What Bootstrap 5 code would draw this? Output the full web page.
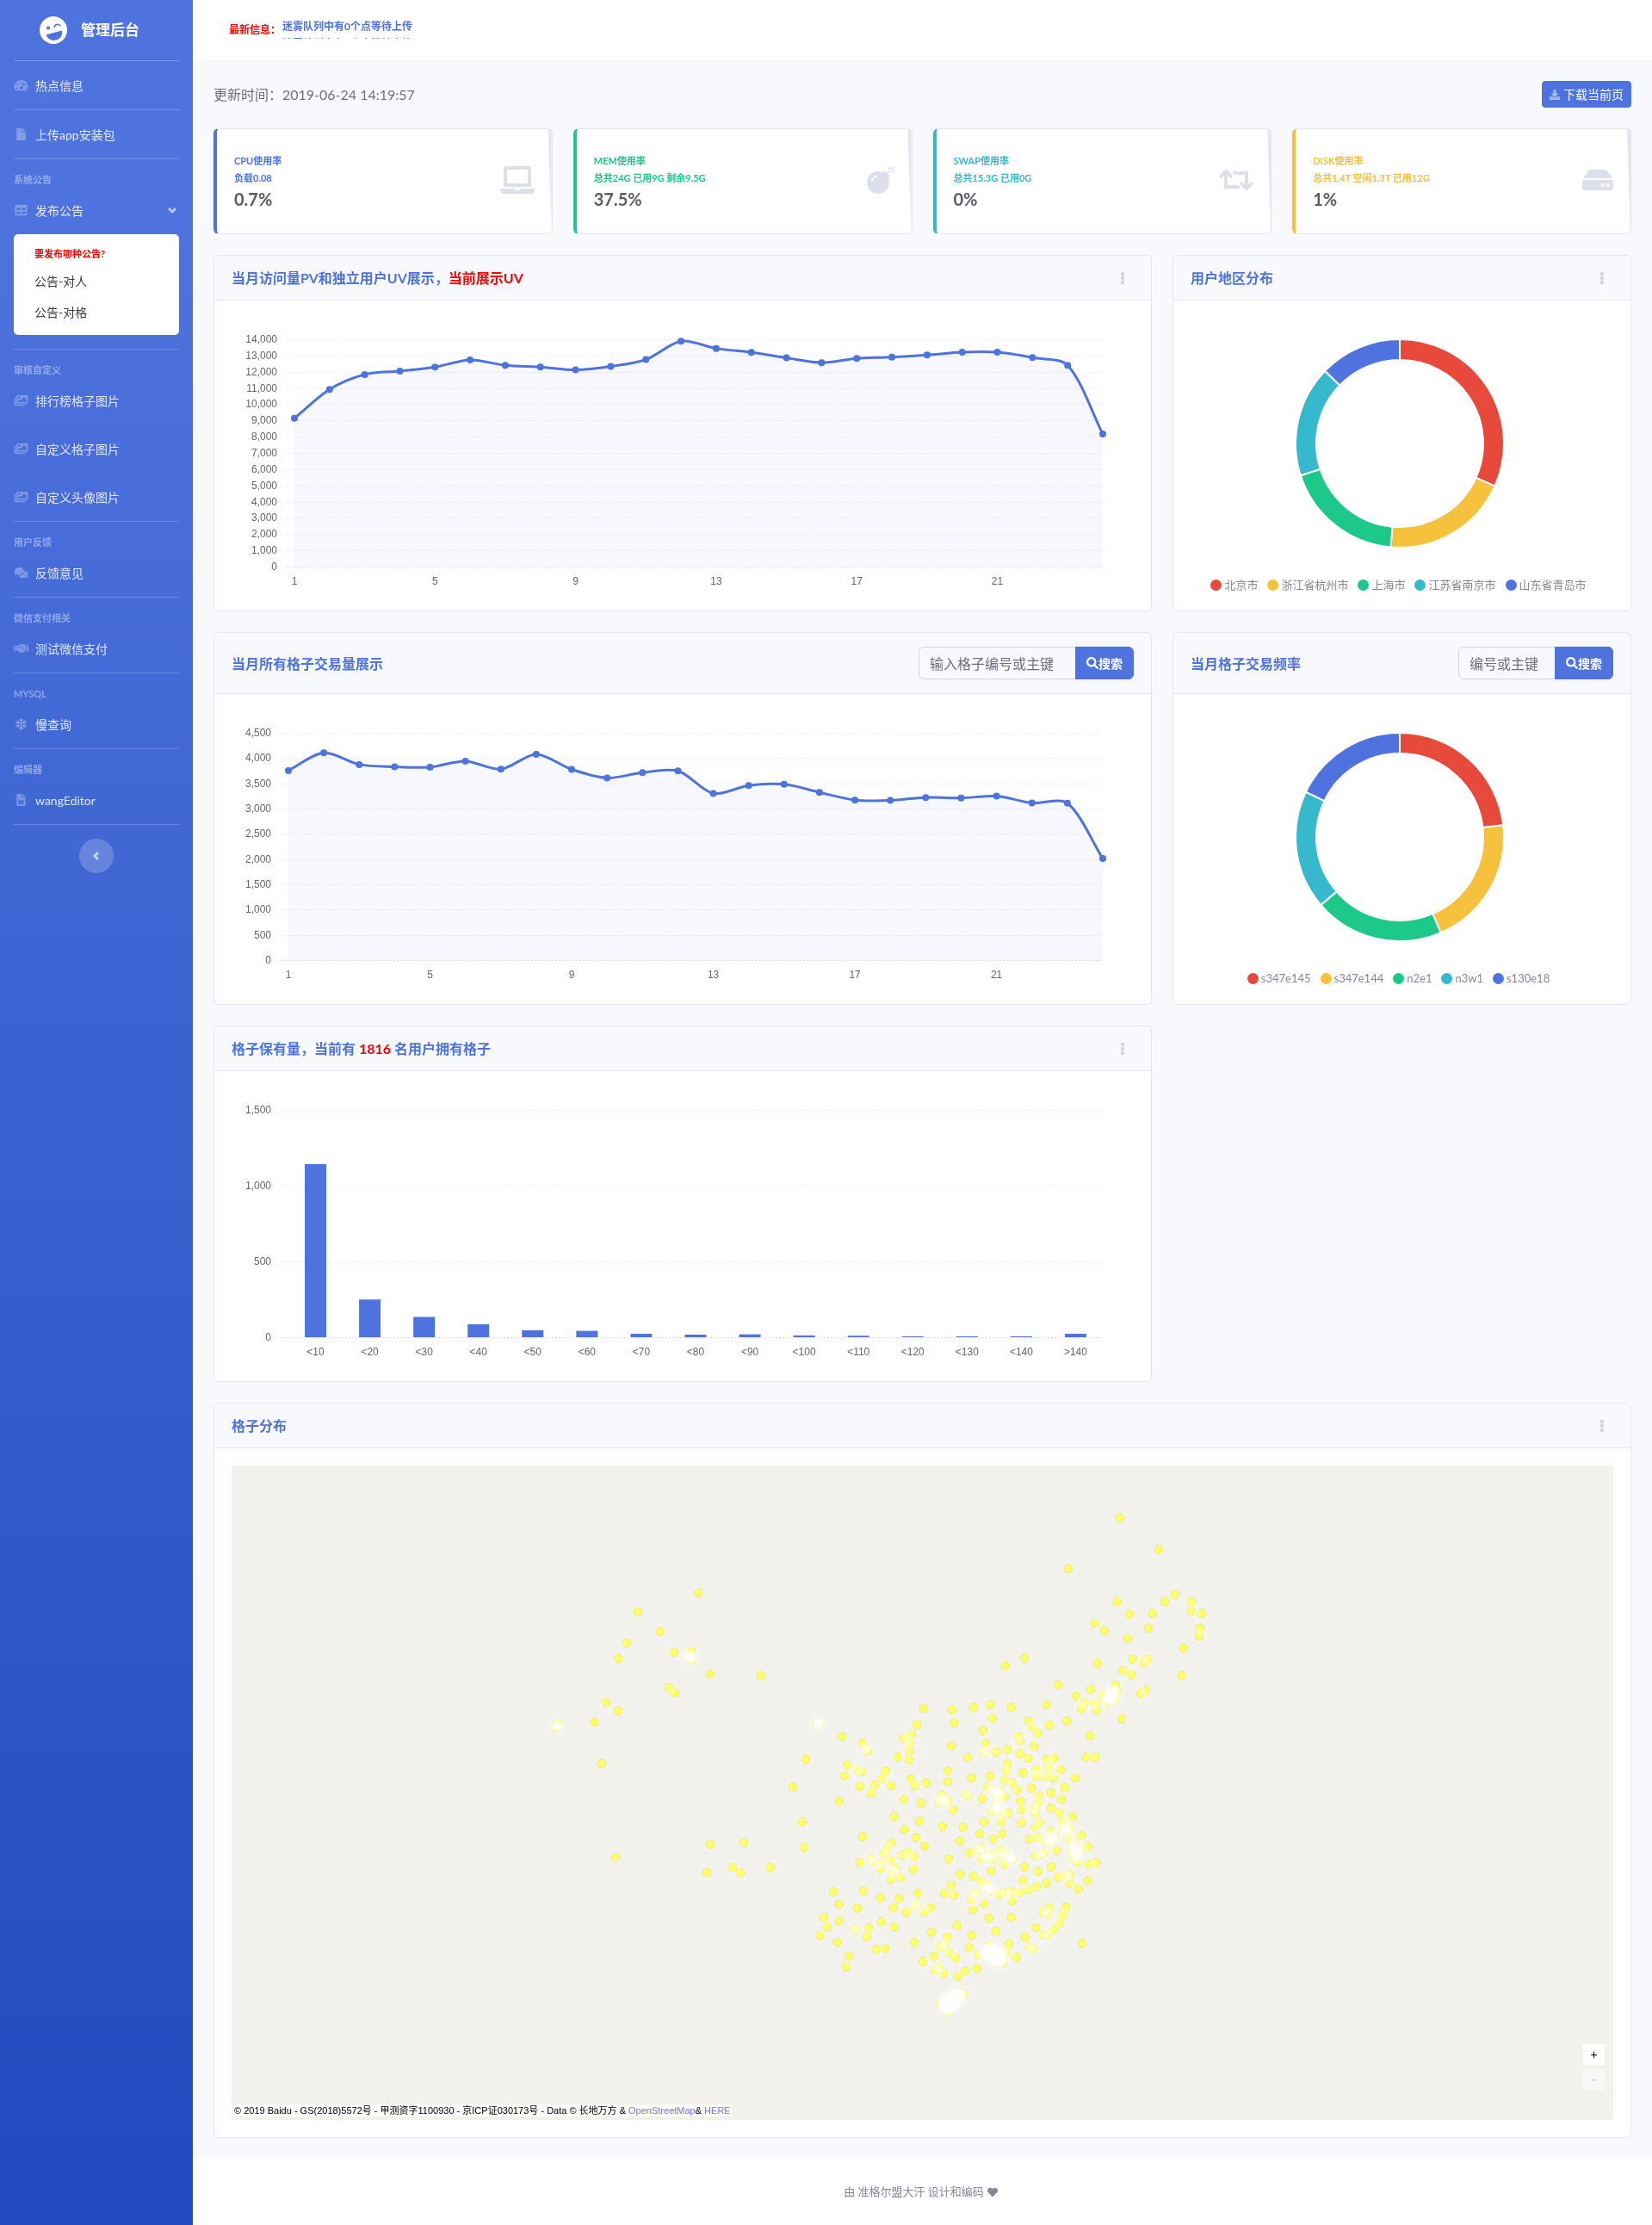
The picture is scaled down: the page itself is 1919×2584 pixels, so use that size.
<!DOCTYPE html>
<html lang="zh-CN">
<head>
<meta charset="utf-8">
<meta name="viewport" content="width=device-width, initial-scale=1">
<title>管理后台</title>
<link href="https://cdn.jsdelivr.net/npm/bootstrap@5.3.0/dist/css/bootstrap.min.css" rel="stylesheet">
<style>
:root{--brand:#4e73df;--line:#e3e6f0;--pale:#f8f9fc;--muted:#858796;--faint:#dddfeb}
body{font-family:Lato,"Noto Sans CJK SC",sans-serif;font-size:16px;color:var(--muted);background:var(--pale)}
a{text-decoration:none}
.ico{fill:currentColor;flex:none}
.side{width:224px;flex:none;background:linear-gradient(180deg,#4e73df 10%,#224abe 100%)}
.side-brand{height:70px;color:#fff;font-size:17px;font-weight:700}
.side hr{margin:0 16px;border-top:1px solid rgba(255,255,255,.2);opacity:1}
.side hr.spaced{margin-bottom:16px}
.side-title{padding:0 16px;font-size:11px;line-height:15px;font-weight:700;color:rgba(255,255,255,.4)}
.side .nav-link{display:flex;align-items:center;gap:8px;height:56px;padding:0 16px;font-size:14px;color:rgba(255,255,255,.85)}
.side .nav-link .ico{width:17px;height:14px;color:rgba(255,255,255,.3)}
.side .nav-link .caret{width:16px;height:12px;margin-left:auto;color:rgba(255,255,255,.6)}
.sub{margin:0 16px 16px;padding:9px 0 8px;background:#fff;border-radius:5px}
.sub-title{padding:0 24px;font-size:11px;line-height:28px;font-weight:700;color:red}
.sub a{display:block;padding:0 24px;font-size:14px;line-height:36px;color:#3a3b45}
.fold{width:40px;height:40px;margin:16px auto 0;border:0;border-radius:50%;background:rgba(255,255,255,.2);color:rgba(255,255,255,.6)}
.topbar{height:70px;background:#fff;padding:0 42px;font-size:12px;font-weight:700;gap:2px}
.news{height:24px;line-height:20px;overflow:hidden;color:var(--brand)}
.page{padding:24px 24px 0}
.stamp{color:#6e707e}
.btn-brand{--bs-btn-color:#fff;--bs-btn-bg:var(--brand);--bs-btn-border-color:var(--brand);--bs-btn-hover-color:#fff;--bs-btn-hover-bg:#2e59d9;font-size:14px}
.panel{border:1px solid var(--line);border-radius:6px;background:#fff;margin-bottom:24px}
.panel-head{display:flex;align-items:center;justify-content:space-between;padding:16px 20px;background:var(--pale);border-bottom:1px solid var(--line);border-radius:6px 6px 0 0}
.panel-head h2{font-size:16px;line-height:19px;font-weight:700;color:var(--brand);margin:0}
.panel-body{padding:20px}
.dots{border:0;background:none;padding:0;width:26px;height:19px;line-height:0;color:#d1d3e2}
.red{color:red}
.panel-head .form-control{font-size:16px;height:38px;background:var(--pale);border-color:#d1d3e2;color:#6e707e}
.panel-head .form-control::placeholder{color:#6e707e}
.w-long{width:183px!important;flex:none!important}
.w-short{width:113px!important;flex:none!important}
.find{width:68px;height:38px;padding:0;font-weight:700}
.stat{position:relative;height:123px;padding:0 20px;border-left:4px solid var(--tone)}
.stat::after{content:"";position:absolute;top:0;right:0;bottom:0;width:4px;background:var(--line);clip-path:polygon(0 0,100% 0,100% 100%)}
.stat-label{font-size:11px;line-height:20px;font-weight:700;color:var(--tone)}
.stat-value{font-size:20px;line-height:28px;font-weight:700;color:#5a5c69}
.stat .ico{color:var(--faint);height:32px;margin-bottom:4px}
.plot{height:320px}
.plot svg,.ring svg,.geo svg{display:block;overflow:visible}
.plot text{font:12px "Liberation Sans",sans-serif;fill:#666}
.ring{height:277px;padding:24px 0 8px}
.key{display:flex;justify-content:center;gap:11px;margin-top:24px;font-size:13px;line-height:19px;white-space:nowrap}
.key span{display:flex;align-items:center;gap:3px;padding:0}
.key i{width:13px;height:13px;border-radius:50%;background:var(--c)}
.geo{position:relative;height:760px;background:#f2f1ec;overflow:hidden}
.geo g{isolation:isolate}
.geo circle{mix-blend-mode:plus-lighter}
.geo-zoom{position:absolute;right:10px;bottom:35px;display:flex;flex-direction:column;gap:5px}
.geo-zoom button{width:25px;height:24px;padding:0;border:0;background:#fff;color:#000;font:14px "Liberation Sans",sans-serif}
.geo-zoom button:disabled{background:#f7f7f7;color:#bbb}
.geo-copy{position:absolute;left:2px;bottom:4px;padding:0 1px;background:rgba(255,255,255,.7);color:#000;font:11px/14px "Liberation Sans","Noto Sans CJK SC",sans-serif}
.geo-copy a{color:#7979dc}
.foot{background:#fff;height:77px;font-size:13px}
</style>
<script src="https://cdn.jsdelivr.net/npm/bootstrap@5.3.0/dist/js/bootstrap.bundle.min.js"></script>
</head>
<body>
<svg class="d-none" aria-hidden="true">
<symbol id="i-gauge" viewBox="0 0 576 512"><path fill-rule="evenodd" d="M288 32C129 32 0 161 0 320c0 53 14 102 39 145 6 9 16 15 27 15h444c11 0 21-6 27-15 25-43 39-92 39-145C576 161 447 32 288 32zm0 64a32 32 0 1 1 0 64 32 32 0 0 1 0-64zM96 352a32 32 0 1 1 0 64 32 32 0 0 1 0-64zm48-160a32 32 0 1 1 0 64 32 32 0 0 1 0-64zm336 160a32 32 0 1 1 0 64 32 32 0 0 1 0-64zm-48-160a32 32 0 1 1 0 64 32 32 0 0 1 0-64zm-37-49c13 4 20 18 15 30l-61 184a62 62 0 0 1 3 59H224a64 64 0 0 1 80-90l61-168c4-12 18-19 30-15z"/></symbol>
<symbol id="i-file" viewBox="0 0 384 512"><path d="M224 136V0H24C10.700 0 0 10.700 0 24v464c0 13.300 10.700 24 24 24h336c13.300 0 24-10.700 24-24V160H248c-13.200 0-24-10.800-24-24zm160-14.100v6.100H256V0h6.100c6.400 0 12.500 2.500 17 7l97.900 98c4.500 4.500 7 10.600 7 16.900z"/></symbol>
<symbol id="i-table" viewBox="0 0 512 512"><path d="M464 32H48C21.490 32 0 53.490 0 80v352c0 26.510 21.490 48 48 48h416c26.510 0 48-21.490 48-48V80c0-26.510-21.490-48-48-48zM224 416H64v-96h160v96zm0-160H64v-96h160v96zm224 160H288v-96h160v96zm0-160H288v-96h160v96z"/></symbol>
<symbol id="i-images" viewBox="0 0 576 512"><path d="M480 416v16c0 26.510-21.490 48-48 48H48c-26.510 0-48-21.490-48-48V176c0-26.510 21.490-48 48-48h16v208c0 44.112 35.888 80 80 80h336zm96-80V80c0-26.510-21.490-48-48-48H144c-26.510 0-48 21.490-48 48v256c0 26.510 21.490 48 48 48h384c26.510 0 48-21.490 48-48zM256 128c0 26.510-21.490 48-48 48s-48-21.490-48-48 21.490-48 48-48 48 21.490 48 48zm-96 144l55.515-55.515c4.686-4.686 12.284-4.686 16.971 0L272 256l135.515-135.515c4.686-4.686 12.284-4.686 16.971 0L512 208v112H160v-48z"/></symbol>
<symbol id="i-comments" viewBox="0 0 576 512"><path d="M416 192c0-88.400-93.100-160-208-160S0 103.600 0 192c0 34.300 14.100 65.900 38 92-13.400 30.200-35.500 54.200-35.800 54.500-2.200 2.300-2.800 5.700-1.500 8.700S4.800 352 8 352c36.600 0 66.900-12.300 88.700-25 32.200 15.700 70.300 25 111.300 25 114.900 0 208-71.600 208-160zm122 220c23.900-26 38-57.700 38-92 0-66.900-53.500-124.200-129.300-148.100.9 6.600 1.300 13.300 1.300 20.100 0 105.900-107.700 192-240 192-10.800 0-21.300-.8-31.700-1.900C207.800 439.600 281.800 480 368 480c41 0 79.100-9.200 111.300-25 21.800 12.700 52.100 25 88.700 25 3.200 0 6.100-1.900 7.300-4.800 1.300-2.900.7-6.300-1.500-8.700-.3-.3-22.400-24.200-35.800-54.500z"/></symbol>
<symbol id="i-shake" viewBox="0 0 640 512"><path d="M0 128h72v256H0zM568 128h72v256h-72zM104 128h90l54-44c20-14 40-20 64-20h104c22 0 42 9 57 24l40 40h23v220h-22c0 20-16 36-36 40-10 26-34 40-60 36-14 22-44 30-68 16-24 14-56 10-74-12L150 352h-46z"/><path d="M330 118l-92 84c-14 14 8 52 50 34l52-42 150 122" fill="none" stroke="#456bd8" stroke-width="24"/></symbol>
<symbol id="i-snow" viewBox="0 0 448 512"><g fill="none" stroke="currentColor" stroke-width="56" stroke-linecap="round"><path d="M224 28v456M28 142l392 228M28 370l392-228"/><path d="M160 66l64 62 64-62M160 446l64-62 64 62M30 224l86-24-20-88M418 288l-86 24 20 88M96 400l20-88-86-24M352 112l-20 88 86 24" stroke-width="48"/></g></symbol>
<symbol id="i-word" viewBox="0 0 384 512"><path d="M224 136V0H24C10.700 0 0 10.700 0 24v464c0 13.300 10.700 24 24 24h336c13.300 0 24-10.700 24-24V160H248c-13.200 0-24-10.800-24-24zm57.100 120H305c7.700 0 13.400 7.100 11.700 14.700l-38 168c-1.200 5.500-6.100 9.300-11.700 9.300h-38c-5.500 0-10.300-3.800-11.600-9.100-25.800-103.500-20.800-81.200-25.600-110.500h-.5c-1.100 14.300-2.400 17.400-25.600 110.500-1.300 5.300-6.100 9.100-11.600 9.100H117c-5.600 0-10.500-3.900-11.700-9.400l-37.800-168C65.800 263.100 71.500 256 79.200 256h24.500c5.700 0 10.600 4 11.700 9.600 15.600 78 20.100 109.500 21 122.200 1.600-10.200 7.300-32.700 29.400-122.700 1.300-5.400 6.100-9.100 11.700-9.100h29.100c5.600 0 10.400 3.800 11.700 9.200 24 100.400 28.800 124 29.600 129.400-.2-11.200-2.600-17.800 21.600-129.200 1.200-5.500 6.100-9.400 11.600-9.400zM384 121.900v6.100H256V0h6.100c6.400 0 12.500 2.500 17 7l97.900 98c4.500 4.500 7 10.600 7 16.900z"/></symbol>
<symbol id="i-down" viewBox="0 0 12 12"><path d="M2 4l4 4 4-4" fill="none" stroke="currentColor" stroke-width="3"/></symbol>
<symbol id="i-left" viewBox="0 0 12 12"><path d="M8 2L4 6l4 4" fill="none" stroke="currentColor" stroke-width="3"/></symbol>
<symbol id="i-more" viewBox="0 0 6 16"><circle cx="3" cy="3" r="2.200"/><circle cx="3" cy="8" r="2.200"/><circle cx="3" cy="13" r="2.200"/></symbol>
<symbol id="i-get" viewBox="0 0 512 512"><path d="M216 0h80c13.300 0 24 10.700 24 24v168h87.700c17.800 0 26.700 21.500 14.100 34.100L269.700 378.300c-7.500 7.500-19.800 7.500-27.300 0L90.100 226.100c-12.600-12.600-3.700-34.100 14.100-34.100H192V24c0-13.300 10.700-24 24-24zm296 376v112c0 13.300-10.700 24-24 24H24c-13.300 0-24-10.700-24-24V376c0-13.300 10.700-24 24-24h146.700l49 49c20.100 20.100 52.500 20.100 72.600 0l49-49H488c13.300 0 24 10.700 24 24zm-124 88c0-11-9-20-20-20s-20 9-20 20 9 20 20 20 20-9 20-20zm64 0c0-11-9-20-20-20s-20 9-20 20 9 20 20 20 20-9 20-20z"/></symbol>
<symbol id="i-search" viewBox="0 0 512 512"><path d="M505 442.700L405.300 343c-4.500-4.500-10.600-7-17-7H372c27.600-35.300 44-79.700 44-128C416 93.100 322.900 0 208 0S0 93.100 0 208s93.100 208 208 208c48.300 0 92.700-16.400 128-44v16.300c0 6.400 2.500 12.500 7 17l99.700 99.700c9.400 9.400 24.600 9.400 33.900 0l28.300-28.300c9.400-9.400 9.400-24.600.1-34zM208 336c-70.700 0-128-57.200-128-128 0-70.700 57.200-128 128-128 70.700 0 128 57.200 128 128 0 70.700-57.200 128-128 128z"/></symbol>
<symbol id="i-heart" viewBox="0 0 512 512"><path d="M462.300 62.600C407.500 15.900 326 24.300 275.700 76.200L256 96.500l-19.700-20.300C186.100 24.300 104.500 15.900 49.700 62.600c-62.800 53.600-66.100 149.800-9.900 207.900l193.500 199.800c12.500 12.900 32.800 12.900 45.300 0l193.500-199.800c56.300-58.100 53-154.300-9.800-207.900z"/></symbol>
</svg>
<div class="d-flex min-vh-100">
<nav class="side d-flex flex-column" aria-label="主菜单">
  <a class="side-brand d-flex align-items-center justify-content-center gap-3 pe-3" href="#">
    <svg width="32" height="32" viewBox="0 0 32 32"><circle cx="16" cy="16" r="16" fill="#fff"/><g transform="rotate(-15 16 16)"><circle cx="11" cy="12" r="2" fill="#4e73df"/><path d="M18 13c1-3 6-3 7 0" fill="none" stroke="#4e73df" stroke-width="1.500" stroke-linecap="round"/><path d="M6.500 19h19c0 5-4 9-9.500 9s-9.500-4-9.500-9z" fill="#4e73df"/></g></svg>
    <span>管理后台</span></a>
  <hr>
  <a class="nav-link" href="#"><svg class="ico"><use href="#i-gauge"/></svg>热点信息</a>
  <hr>
  <a class="nav-link" href="#"><svg class="ico"><use href="#i-file"/></svg>上传app安装包</a>
  <hr class="spaced">
  <div class="side-title">系统公告</div>
  <a class="nav-link" href="#sub" aria-expanded="true"><svg class="ico"><use href="#i-table"/></svg>发布公告<svg class="ico caret"><use href="#i-down"/></svg></a>
  <div class="sub" id="sub"><div class="sub-title">要发布哪种公告?</div><a href="#">公告-对人</a><a href="#">公告-对格</a></div>
  <hr class="spaced">
  <div class="side-title">审核自定义</div>
  <a class="nav-link" href="#"><svg class="ico"><use href="#i-images"/></svg>排行榜格子图片</a>
  <a class="nav-link" href="#"><svg class="ico"><use href="#i-images"/></svg>自定义格子图片</a>
  <a class="nav-link" href="#"><svg class="ico"><use href="#i-images"/></svg>自定义头像图片</a>
  <hr class="spaced">
  <div class="side-title">用户反馈</div>
  <a class="nav-link" href="#"><svg class="ico"><use href="#i-comments"/></svg>反馈意见</a>
  <hr class="spaced">
  <div class="side-title">微信支付相关</div>
  <a class="nav-link" href="#"><svg class="ico"><use href="#i-shake"/></svg>测试微信支付</a>
  <hr class="spaced">
  <div class="side-title">MYSQL</div>
  <a class="nav-link" href="#"><svg class="ico"><use href="#i-snow"/></svg>慢查询</a>
  <hr class="spaced">
  <div class="side-title">编辑器</div>
  <a class="nav-link" href="#"><svg class="ico"><use href="#i-word"/></svg>wangEditor</a>
  <hr>
  <button class="fold d-flex align-items-center justify-content-center" type="button" aria-label="收起菜单"><svg class="ico" width="12" height="12"><use href="#i-left"/></svg></button>
</nav>
<div class="flex-grow-1 d-flex flex-column">
  <header class="topbar d-flex align-items-center">
    <span class="red">最新信息：</span>
    <div class="news mb-1"><div>迷雾队列中有0个点等待上传</div><div>迷雾队列中有0个点等待上传</div></div>
  </header>
  <main class="page flex-grow-1">
    <div class="d-flex align-items-center justify-content-between mb-4">
      <div class="stamp">更新时间：2019-06-24 14:19:57</div>
      <button class="btn btn-sm btn-brand d-flex align-items-center gap-1" type="button"><svg class="ico opacity-50" width="12" height="12"><use href="#i-get"/></svg>下载当前页</button>
    </div>
    <div class="row">
      <div class="col-3"><div class="panel stat d-flex align-items-center justify-content-between" style="--tone:#4e73df"><div><div class="stat-label">CPU使用率</div><div class="stat-label">负载0.08</div><div class="stat-value">0.7%</div></div>
        <svg class="ico" width="40" viewBox="0 0 640 512"><path d="M624 416H381.540c-.74 19.810-14.710 32-32.740 32H288c-18.690 0-33.020-17.470-32.770-32H16c-8.800 0-16 7.200-16 16v16c0 35.200 28.800 64 64 64h512c35.200 0 64-28.800 64-64v-16c0-8.800-7.200-16-16-16zM576 48c0-26.400-21.600-48-48-48H112C85.600 0 64 21.600 64 48v336h512V48zm-64 272H128V64h384v256z"/></svg></div></div>
      <div class="col-3"><div class="panel stat d-flex align-items-center justify-content-between" style="--tone:#1cc88a"><div><div class="stat-label">MEM使用率</div><div class="stat-label">总共24G 已用9G 剩余9.5G</div><div class="stat-value">37.5%</div></div>
        <svg class="ico" width="32" viewBox="0 0 512 512"><path d="M440.500 88.500l-52 52L415 167c9.400 9.400 9.400 24.600 0 33.900l-17.400 17.400c11.800 26.100 18.400 55.100 18.400 85.600 0 114.900-93.100 208-208 208S0 418.900 0 304 93.100 96 208 96c30.500 0 59.500 6.600 85.600 18.400L311 97c9.400-9.400 24.600-9.400 33.900 0l26.500 26.500 52-52 17.100 17zM500 60h-24c-6.600 0-12 5.400-12 12s5.400 12 12 12h24c6.600 0 12-5.400 12-12s-5.400-12-12-12zM440 0c-6.600 0-12 5.400-12 12v24c0 6.600 5.400 12 12 12s12-5.400 12-12V12c0-6.600-5.400-12-12-12zm33.900 55l17-17c4.700-4.700 4.700-12.300 0-17-4.700-4.700-12.300-4.700-17 0l-17 17c-4.700 4.700-4.700 12.300 0 17 4.800 4.700 12.400 4.700 17 0zm-67.800 0c4.700 4.700 12.300 4.700 17 0 4.700-4.700 4.700-12.300 0-17l-17-17c-4.700-4.700-12.300-4.700-17 0-4.700 4.700-4.700 12.300 0 17l17 17zm67.800 34c-4.700-4.700-12.300-4.700-17 0-4.700 4.700-4.700 12.300 0 17l17 17c4.700 4.700 12.300 4.700 17 0 4.700-4.700 4.700-12.300 0-17l-17-17zM112 272c0-35.300 28.700-64 64-64 8.800 0 16-7.200 16-16s-7.200-16-16-16c-52.900 0-96 43.100-96 96 0 8.800 7.200 16 16 16s16-7.200 16-16z"/></svg></div></div>
      <div class="col-3"><div class="panel stat d-flex align-items-center justify-content-between" style="--tone:#36b9cc"><div><div class="stat-label">SWAP使用率</div><div class="stat-label">总共15.3G 已用0G</div><div class="stat-value">0%</div></div>
        <svg class="ico" width="40" viewBox="0 0 640 512"><path d="M629.657 343.598L528.971 444.284c-9.373 9.372-24.568 9.372-33.941 0L394.343 343.598c-9.373-9.373-9.373-24.569 0-33.941l10.823-10.823c9.562-9.562 25.133-9.340 34.419.492L480 342.118V160H292.451a24.005 24.005 0 0 1-16.971-7.029l-16-16C244.361 121.851 255.069 96 276.451 96H520c13.255 0 24 10.745 24 24v222.118l40.416-42.792c9.285-9.831 24.856-10.054 34.419-.492l10.823 10.823c9.372 9.372 9.372 24.569-.001 33.941zm-265.138 15.431A23.999 23.999 0 0 0 347.548 352H160V169.881l40.416 42.792c9.286 9.831 24.856 10.054 34.419.491l10.822-10.822c9.373-9.373 9.373-24.569 0-33.941L144.971 67.716c-9.373-9.373-24.569-9.373-33.941 0L10.343 168.402c-9.373 9.373-9.373 24.569 0 33.941l10.822 10.822c9.562 9.562 25.133 9.340 34.419-.491L96 169.881V392c0 13.255 10.745 24 24 24h243.549c21.382 0 32.090-25.851 16.971-40.971l-16.001-16z"/></svg></div></div>
      <div class="col-3"><div class="panel stat d-flex align-items-center justify-content-between" style="--tone:#f6c23e"><div><div class="stat-label">DISK使用率</div><div class="stat-label">总共1.4T 空闲1.3T 已用12G</div><div class="stat-value">1%</div></div>
        <svg class="ico" width="36" viewBox="0 0 576 512"><path d="M576 304v96c0 26.510-21.490 48-48 48H48c-26.510 0-48-21.490-48-48v-96c0-26.510 21.490-48 48-48h480c26.510 0 48 21.490 48 48zm-48-80a79.557 79.557 0 0 1 30.777 6.165L462.250 85.374A48.003 48.003 0 0 0 422.311 64H153.689a48 48 0 0 0-39.938 21.374L17.223 230.165A79.557 79.557 0 0 1 48 224h480zm-48 96c-17.673 0-32 14.327-32 32s14.327 32 32 32 32-14.327 32-32-14.327-32-32-32zm-96 0c-17.673 0-32 14.327-32 32s14.327 32 32 32 32-14.327 32-32-14.327-32-32-32z"/></svg></div></div>
    </div>
    <div class="row">
      <div class="col-8"><section class="panel">
        <div class="panel-head"><h2>当月访问量PV和独立用户UV展示，<span class="red">当前展示UV</span></h2><button class="dots" type="button" aria-label="更多"><svg class="ico" width="6" height="16"><use href="#i-more"/></svg></button></div>
        <div class="panel-body"><div class="plot" id="visits"></div></div></section></div>
      <div class="col-4"><section class="panel">
        <div class="panel-head"><h2>用户地区分布</h2><button class="dots" type="button" aria-label="更多"><svg class="ico" width="6" height="16"><use href="#i-more"/></svg></button></div>
        <div class="panel-body"><div class="ring me-1" data-ends="114.200,185,252.100,314.100,360"></div>
          <div class="key me-2"><span style="--c:#e74a3b"><i></i>北京市</span><span style="--c:#f6c23e"><i></i>浙江省杭州市</span><span style="--c:#1cc88a"><i></i>上海市</span><span style="--c:#36b9cc"><i></i>江苏省南京市</span><span style="--c:#4e73df"><i></i>山东省青岛市</span></div></div></section></div>
    </div>
    <div class="row">
      <div class="col-8"><section class="panel">
        <div class="panel-head"><h2>当月所有格子交易量展示</h2><form class="input-group w-auto"><input class="form-control w-long" type="text" placeholder="输入格子编号或主键" aria-label="输入格子编号或主键"><button class="btn btn-brand find d-flex align-items-center justify-content-center" type="button"><svg class="ico" width="14" height="14"><use href="#i-search"/></svg>搜索</button></form></div>
        <div class="panel-body"><div class="plot" id="trades"></div></div></section></div>
      <div class="col-4"><section class="panel">
        <div class="panel-head"><h2>当月格子交易频率</h2><form class="input-group w-auto"><input class="form-control w-short" type="text" placeholder="编号或主键" aria-label="编号或主键"><button class="btn btn-brand find d-flex align-items-center justify-content-center" type="button"><svg class="ico" width="14" height="14"><use href="#i-search"/></svg>搜索</button></form></div>
        <div class="panel-body"><div class="ring me-1" data-ends="83.500,156.800,229.200,295.600,360"></div>
          <div class="key me-2"><span style="--c:#e74a3b"><i></i>s347e145</span><span style="--c:#f6c23e"><i></i>s347e144</span><span style="--c:#1cc88a"><i></i>n2e1</span><span style="--c:#36b9cc"><i></i>n3w1</span><span style="--c:#4e73df"><i></i>s130e18</span></div></div></section></div>
    </div>
    <div class="row"><div class="col-8"><section class="panel">
      <div class="panel-head"><h2>格子保有量，当前有 <span class="red">1816</span> 名用户拥有格子</h2><button class="dots" type="button" aria-label="更多"><svg class="ico" width="6" height="16"><use href="#i-more"/></svg></button></div>
      <div class="panel-body"><div class="plot" id="holdings"></div></div></section></div></div>
    <section class="panel">
      <div class="panel-head"><h2>格子分布</h2><button class="dots" type="button" aria-label="更多"><svg class="ico" width="6" height="16"><use href="#i-more"/></svg></button></div>
      <div class="panel-body"><div class="geo" id="geo">
        <div class="geo-zoom"><button type="button" aria-label="放大">+</button><button type="button" aria-label="缩小" disabled>-</button></div>
        <div class="geo-copy">© 2019 Baidu - GS(2018)5572号 - 甲测资字1100930 - 京ICP证030173号 - Data © 长地万方 &amp; <a href="#">OpenStreetMap</a>&amp; <a href="#">HERE</a></div>
      </div></div>
    </section>
  </main>
  <footer class="foot d-flex align-items-center justify-content-center gap-1 pe-1">由 准格尔盟大汗 设计和编码 <svg class="ico" width="12" height="12"><use href="#i-heart"/></svg></footer>
</div>
</div>
<script>
const fmt = n => n.toLocaleString('en-US');
const TOP = 25, BASE = 289;

// Horizontal grid with value labels, shared by all charts
function axes(w, left, right, max, step) {
  let s = '';
  for (let v = 0; v <= max; v += step) {
    const y = Math.round(BASE - v / max * (BASE - TOP)) + .5;
    s += `<line x1="${left - 10}" x2="${right}" y1="${y}" y2="${y}" stroke="${v ? '#eaecf4' : '#dddfeb'}" stroke-dasharray="2"/>` +
         `<text x="${left - 20}" y="${y + 3.5}" text-anchor="end">${fmt(v)}</text>`;
  }
  return s;
}
function mount(box, w, body) {
  box.innerHTML = `<svg width="${w}" height="320" role="img">${body}</svg>`;
}
function lineChart(id, left, max, step, data) {
  const box = document.getElementById(id), w = box.clientWidth, right = w - 36;
  const p = data.map((v, i) => [left + i * (right - left) / (data.length - 1), BASE - v / max * (BASE - TOP)]);
  // Spline control points with tension 0.3
  const c = p.map((q, i) => {
    const a = p[i - 1] || q, b = p[i + 1] || q;
    const d1 = Math.hypot(q[0] - a[0], q[1] - a[1]), d2 = Math.hypot(b[0] - q[0], b[1] - q[1]);
    const f1 = .3 * d1 / (d1 + d2), f2 = .3 * d2 / (d1 + d2);
    return [[q[0] - f1 * (b[0] - a[0]), q[1] - f1 * (b[1] - a[1])], [q[0] + f2 * (b[0] - a[0]), q[1] + f2 * (b[1] - a[1])]];
  });
  let d = `M${p[0]}`;
  for (let i = 1; i < p.length; i++) d += `C${c[i - 1][1]} ${c[i][0]} ${p[i]}`;
  let s = axes(w, left, right, max, step);
  s += `<path d="${d}L${right},${BASE}L${left},${BASE}Z" fill="rgba(78,115,223,.05)"/><path d="${d}" fill="none" stroke="#4e73df" stroke-width="3"/>`;
  p.forEach((q, i) => {
    s += `<circle cx="${q[0]}" cy="${q[1]}" r="4" fill="#4e73df"/>`;
    if (i % 4 === 0) s += `<text x="${q[0]}" y="310" text-anchor="middle">${i + 1}</text>`;
  });
  mount(box, w, s);
}
function barChart(id, left, max, step, data) {
  const box = document.getElementById(id), w = box.clientWidth, right = w - 36, slot = (right - left) / data.length;
  let s = axes(w, left, right, max, step);
  data.forEach((v, i) => {
    const x = left + slot * (i + .5), h = v / max * (BASE - TOP);
    s += `<rect x="${x - 12.5}" y="${BASE - h}" width="25" height="${h}" fill="#4e73df"/>` +
         `<text x="${x}" y="310" text-anchor="middle">${i < 14 ? '&lt;' + (i + 1) * 10 : '&gt;140'}</text>`;
  });
  mount(box, w, s);
}
function rings() {
  const tones = ['#e74a3b', '#f6c23e', '#1cc88a', '#36b9cc', '#4e73df'];
  document.querySelectorAll('.ring').forEach(box => {
    const w = box.clientWidth, cx = Math.floor(w / 2), cy = 122, R = 121, r = 97;
    const at = (deg, q) => { const t = deg * Math.PI / 180; return [cx + q * Math.sin(t), cy - q * Math.cos(t)]; };
    let from = 0, s = '';
    box.dataset.ends.split(',').map(Number).forEach((to, i) => {
      const big = to - from > 180 ? 1 : 0;
      s += `<path d="M${at(from, R)}A${R},${R} 0 ${big} 1 ${at(to, R)}L${at(to, r)}A${r},${r} 0 ${big} 0 ${at(from, r)}Z" fill="${tones[i]}" stroke="#fff" stroke-width="2"/>`;
      from = to;
    });
    box.innerHTML = `<svg width="${w}" height="245" role="img">${s}</svg>`;
  });
}
const sheets = [
{x:331,y:78,sx:3,sy:3,pts:[633,210,423,276,501,345,384,384,354,438,549,417,609,414,600,434,609,444,604,436,675,492,852,498,531,540,552,558,312,591,354,621,270,660,144,666,138,681,141,674,297,804,345,1131,675,1086,792,1080,663,1185,753,1167,780,1185,885,1167,963,885]},
{x:651,y:18,sx:2.9037,sy:2.45,pts:[86,689,92,690,89,689,168,727,46,791,34,970,40,1043,
1106,105,1237,195,932,250,1097,343,1138,379,1022,404,1054,426,1132,448,1216,377,1202,419,1257,343,1292,323,1347,343,1347,370,1382,377,1376,419,1373,441,1321,475,1315,553,784,504,720,526,1030,519,1149,507,1200,507,1187,517,1115,539,1144,551,897,580,1008,593,958,612,987,632,976,649,1022,632,1028,652,1048,610,1091,580,1097,597,1089,622,1060,630,1075,610,1080,605,1070,620,1193,595,1176,605,1112,676,926,683,859,637,1005,725,992,786,1022,786,
740,644,668,637,612,644,540,651,546,688,676,676,444,647,421,693,644,710,653,747,651,772,648,774,688,771,726,764,537,754,592,786,763,727,769,740,798,683,810,700,830,717,868,695,816,754,769,776,796,789,377,730,403,722,397,745,397,768,395,793,357,786,238,745,249,762,255,769,186,808,177,838,221,823,235,827,229,869,267,889,278,865,302,847,316,825,334,867,400,847,415,867,453,859,525,825,525,855,606,845,159,911,377,906,435,916,505,893,498,914,508,912,525,909,543,936,587,892,592,896,642,904,345,955,430,967,380,992,418,1014,447,1039,508,982,577,985,566,1024,598,1058,633,1004,648,970,679,1019,708,1004,706,970,780,830,668,840,726,805,723,825,717,852,743,859,760,879,807,874,659,870,674,880,688,882,700,880,717,899,691,904,690,930,676,940,706,945,729,945,688,925,770,911,775,936,775,972,859,791,885,789,824,820,866,816,906,821,824,840,851,840,882,845,955,845,920,872,874,887,833,896,830,918,817,933,821,945,909,906,874,931,903,945,946,955,836,972,821,985,914,970,874,997,801,1019,830,1014,850,1022,868,1028,880,1020,892,1051,851,1056,838,1062,822,1066,886,1010,917,990,923,995,938,990,976,1009,998,1039,935,1019,950,1030,958,1045,946,1053,970,1053,960,1060,950,1077,964,1085,1001,1090,1025,1085,998,1137,967,1161,937,1144,926,1121,937,1119,897,1127,859,1144,874,1098,830,1112,784,1098,778,1137,824,1154,798,1163,769,1171,740,1168,720,1170,700,1176,743,1195,665,1160,662,1155,668,1165,639,1139,612,1124,671,1109,566,1119,528,1075,636,1043,630,1047,638,1073,655,1072,670,1063,680,1075,703,1051,715,1062,717,1090,735,1070,746,1076,740,1072,537,1151,514,1173,546,1178,604,1190,613,1175,622,1171,648,1203,610,1220,665,1244,740,1242,557,1264,688,1281,606,1293,598,1327,731,1317,757,1355,786,1298,802,1325,811,1330,822,1271,848,1291,862,1291,885,1276,903,1257,914,1234,923,1213,868,1213,848,1227,862,1232,979,1315,
229,1085,267,1075,270,1082,299,1088,299,1103,311,1060,323,1044,336,1029,238,1012,334,1080,342,1110,350,1103,334,1134,365,1129,371,1065,391,1056,412,1068,409,1105,
139,1168,241,1166,299,1186,360,1188,342,1215,424,1173,416,1208,419,1205,386,1227,447,1227,467,1215,221,1215,159,1205,159,1252,107,1242,119,1269,95,1293,153,1313,302,1254,345,1269,212,1274,215,1277,258,1271,252,1296,284,1333,314,1330,192,1352,183,1382,412,1313,470,1284,441,1367,479,1352,523,1298,502,1325,515,1318,531,1342,552,1357,482,1392,494,1384,511,1401,560,1409,584,1394,624,1387,
665,1320,627,1347,645,1345,665,1345,680,1340,690,1350,700,1360,711,1370,688,1370,670,1355,721,1342,675,1330,685,1338,698,1346,680,1350,660,1335,695,1368,672,1346,
578,1460,560,1455,545,1462,530,1470,515,1478,500,1487,515,1495,528,1510,540,1498,555,1485,565,1472,540,1480,530,1490,520,1485,550,1470,560,1465,530,1482,545,1475,525,1500]}];
function drawMap() {
  const box = document.getElementById('geo'), w = box.clientWidth, shift = (w - 1605) / 2;
  let s = '';
  sheets.forEach(t => {
    for (let i = 0; i < t.pts.length; i += 2) {
      const x = (t.x + t.pts[i] / t.sx + shift).toFixed(1), y = (t.y + t.pts[i + 1] / t.sy).toFixed(1);
      s += `<circle cx="${x}" cy="${y}" r="15" fill="url(#halo)"/><circle cx="${x}" cy="${y}" r="5" fill="rgba(255,255,0,.58)" stroke="rgba(190,190,60,.3)"/>`;
    }
  });
  box.querySelector('svg')?.remove();
  box.insertAdjacentHTML('afterbegin', `<svg width="${w}" height="760" role="img" aria-label="格子分布"><defs><radialGradient id="halo"><stop offset="0" stop-color="#fff" stop-opacity=".4"/><stop offset=".32" stop-color="#fff" stop-opacity=".34"/><stop offset=".38" stop-color="#fff" stop-opacity=".16"/><stop offset=".6" stop-color="#fff" stop-opacity=".08"/><stop offset="1" stop-color="#fff" stop-opacity="0"/></radialGradient></defs><g>${s}</g></svg>`);
}
function draw() {
  lineChart('visits', 73, 14000, 1000, [9134,10914,11831,12043,12290,12730,12395,12290,12113,12325,12748,13877,13436,13189,12854,12560,12820,12900,13030,13200,13200,12870,12395,8164]);
  lineChart('trades', 66, 4500, 500, [3752,4103,3871,3825,3820,3939,3780,4075,3775,3605,3712,3746,3298,3457,3480,3321,3168,3162,3219,3208,3247,3111,3106,2012]);
  barChart('holdings', 66, 1500, 500, [1142,249,134,86,46,42,23,17,19,12,10,6,6,6,23]);
  rings();
  drawMap();
}
draw();
addEventListener('resize', draw);
</script>
</body>
</html>
